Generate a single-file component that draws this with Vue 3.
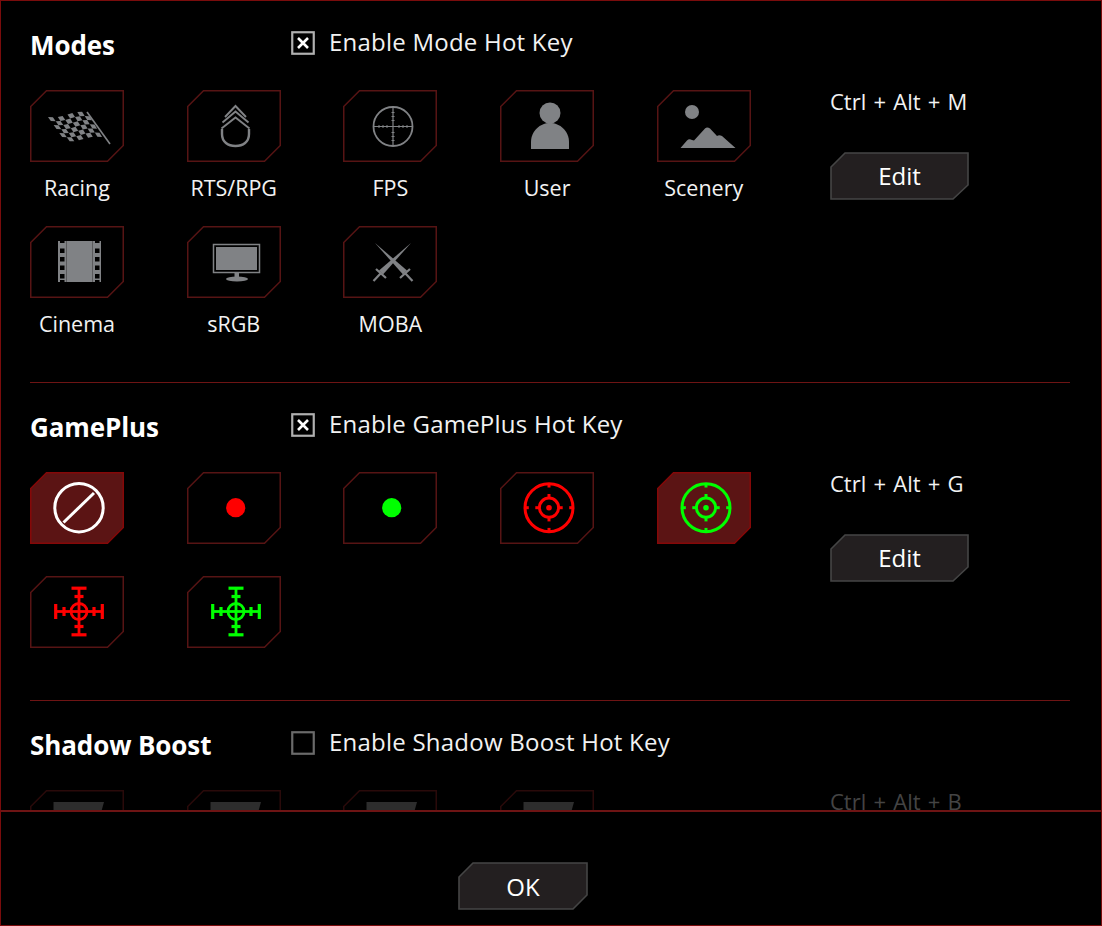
<script setup>
const frame = '0.75,16.5 16.5,0.75 93.25,0.75 93.25,55.5 77.5,71.25 0.75,71.25'

const modes = [
  { icon: 'racing', label: 'Racing' },
  { icon: 'rank', label: 'RTS/RPG' },
  { icon: 'scope', label: 'FPS' },
  { icon: 'user', label: 'User' },
  { icon: 'scenery', label: 'Scenery' },
  { icon: 'cinema', label: 'Cinema' },
  { icon: 'monitor', label: 'sRGB' },
  { icon: 'swords', label: 'MOBA' }
]
const plus = [
  { icon: 'none', active: true },
  { icon: 'dot', color: '#ff0000' },
  { icon: 'dot', color: '#00ff00' },
  { icon: 'target', color: '#ff0000' },
  { icon: 'target', color: '#00ff00', active: true },
  { icon: 'cross', color: '#ff0000' },
  { icon: 'cross', color: '#00ff00' }
]
const shadow = [{ icon: 'slab' }, { icon: 'slab' }, { icon: 'slab' }, { icon: 'slab' }]

const sections = [
  { title: 'Modes', hot: 'Enable Mode Hot Key', checked: true, keys: 'Ctrl + Alt + M', tiles: modes, labelled: true, edit: true },
  { title: 'GamePlus', hot: 'Enable GamePlus Hot Key', checked: true, keys: 'Ctrl + Alt + G', tiles: plus, edit: true },
  { title: 'Shadow Boost', hot: 'Enable Shadow Boost Hot Key', checked: false, keys: 'Ctrl + Alt + B', tiles: shadow, dim: true }
]

// Checker flag cells on a skewed quad
const A = [18, 27], B = [57, 22], C = [72, 47], D = [35, 51]
const pt = (u, v) => {
  const tx = A[0] + (B[0] - A[0]) * u, ty = A[1] + (B[1] - A[1]) * u
  const bx = D[0] + (C[0] - D[0]) * u, by = D[1] + (C[1] - D[1]) * u
  const w = Math.sin(u * Math.PI * 2) * 1.2
  return [(tx + (bx - tx) * v).toFixed(1), (ty + (by - ty) * v + w).toFixed(1)].join(',')
}
const cells = []
const nu = 8, nv = 6
for (let i = 0; i < nu; i++) {
  for (let j = 0; j < nv; j++) {
    if ((i + j) % 2 === 0) {
      cells.push([pt(i / nu, j / nv), pt((i + 1) / nu, j / nv), pt((i + 1) / nu, (j + 1) / nv), pt(i / nu, (j + 1) / nv)].join(' '))
    }
  }
}
const scopeTicks = [-14, -10, -6, 6, 10, 14]
const filmHoles = [22.5, 31, 39.5, 48]
const arms = [0, 90, 180, 270]
</script>

<template>
  <div class="window">
    <div class="scroll">
      <section v-for="s in sections" :key="s.title" class="section">
        <header class="head">
          <h2 class="title">{{ s.title }}</h2>
          <div class="hot">
            <svg class="check" width="24" height="24" viewBox="0 0 24 24">
              <rect x="1.25" y="1.25" width="21.5" height="21.5" fill="none" :stroke="s.checked ? '#b0b0b0' : '#6a6a6a'" stroke-width="2.2" />
              <path v-if="s.checked" d="M7 7 L17 17 M17 7 L7 17" stroke="#fff" stroke-width="2.6" fill="none" />
            </svg>
            <span class="hot-text">{{ s.hot }}</span>
          </div>
        </header>
        <div class="body">
          <div class="grid" :class="{ labelled: s.labelled }">
            <div v-for="(t, i) in s.tiles" :key="i" class="item">
              <svg class="tile" width="94" height="72" viewBox="0 0 94 72">
                <polygon :points="frame" :class="t.active ? 'frame-on' : s.dim ? 'frame-dim' : 'frame'" />
                <g v-if="t.icon === 'racing'" class="fill">
                  <polygon v-for="(c, k) in cells" :key="k" :points="c" />
                  <path d="M57 22 L80 54" stroke="#808285" stroke-width="1.6" fill="none" />
                </g>
                <g v-else-if="t.icon === 'rank'" class="line" stroke-width="1.9">
                  <path d="M38 27 L48.5 16 L59 27" />
                  <path d="M35.5 32.5 L48.5 21.5 L61.5 32.5" />
                  <path d="M34.5 38.5 L48.5 27.5 L62.5 38.5" />
                  <path d="M35 39 V44 C35 52 41 56 48.5 56 C56 56 62 52 62 44 V39" stroke-width="2.4" />
                </g>
                <g v-else-if="t.icon === 'scope'" class="line">
                  <circle cx="50" cy="36.5" r="19.5" stroke-width="1.8" />
                  <path d="M50 17 V56 M30.5 36.5 H69.5" stroke-width="1.2" />
                  <path v-for="d in scopeTicks" :key="d" :d="`M${50 + d} 35 v3 M48.5 ${36.5 + d} h3`" stroke-width="1" />
                </g>
                <g v-else-if="t.icon === 'user'" class="fill">
                  <circle cx="50" cy="23" r="10.5" />
                  <path d="M31 59 V52 C31 41 40 33 50 33 C60 33 69 41 69 52 V59 Z" />
                </g>
                <g v-else-if="t.icon === 'scenery'" class="fill">
                  <circle cx="35" cy="22" r="7" />
                  <path d="M23.5 58 L30 50.5 Q32 48.5 35 50 L37 50.5 L48 38.5 Q50 36.5 53 38.5 L60 46 Q62 44.5 65 46 L78.5 58 Z" />
                </g>
                <g v-else-if="t.icon === 'cinema'">
                  <path class="fill" d="M28 15 H71 V56 H28 Z" />
                  <path d="M36.5 15 V56 M62.5 15 V56" stroke="#5a5a5c" stroke-width="1" />
                  <g v-for="y in filmHoles" :key="y" fill="#000">
                    <rect x="30" :y="y" width="4.5" height="4.5" />
                    <rect x="65" :y="y" width="4.5" height="4.5" />
                  </g>
                  <path d="M30 15 h4.5 v2 h-4.5 Z M65 15 h4.5 v2 h-4.5 Z M30 54 h4.5 v2 h-4.5 Z M65 54 h4.5 v2 h-4.5 Z" fill="#000" />
                </g>
                <g v-else-if="t.icon === 'monitor'">
                  <rect x="26.5" y="18.5" width="46" height="28" fill="none" stroke="#808285" stroke-width="1.5" />
                  <rect x="29" y="21" width="41" height="23" fill="#808285" />
                  <rect x="47.5" y="47" width="4.5" height="5" fill="#808285" />
                  <ellipse cx="50" cy="53" rx="11" ry="2.4" fill="#808285" />
                </g>
                <g v-else-if="t.icon === 'swords'">
                  <g v-for="m in [1, -1]" :key="m" :transform="m === 1 ? '' : 'matrix(-1 0 0 1 100 0)'">
                    <polygon class="fill" points="32,17 60,48.5 64,44.5" />
                    <path d="M57 52 L67 43 M62 47 L69.5 55" stroke="#808285" stroke-width="2.2" fill="none" />
                  </g>
                </g>
                <g v-else-if="t.icon === 'none'" fill="none" stroke="#fff">
                  <circle cx="49" cy="35.7" r="24.2" stroke-width="3" />
                  <path d="M33.5 50.5 L64 21" stroke-width="3" />
                </g>
                <circle v-else-if="t.icon === 'dot'" cx="48.7" cy="35.7" r="9.6" :fill="t.color" />
                <g v-else-if="t.icon === 'target'" fill="none" :stroke="t.color" stroke-width="3">
                  <circle cx="49" cy="35.7" r="24" />
                  <circle cx="49" cy="35.7" r="9.6" />
                  <g v-for="a in arms" :key="a" :transform="`rotate(${a} 49 35.7)`">
                    <path d="M49 11.5 V15.5" />
                    <path d="M49 22 V26.5" />
                  </g>
                  <circle cx="49" cy="35.7" r="2.8" :fill="t.color" stroke="none" />
                </g>
                <g v-else-if="t.icon === 'cross'" fill="none" :stroke="t.color" stroke-width="2.8">
                  <circle cx="49" cy="35.5" r="8" />
                  <g v-for="a in arms" :key="a" :transform="`rotate(${a} 49 35.5)`">
                    <path d="M49 35.5 V12" />
                    <path d="M41.5 12.2 H56.5" stroke-width="3.2" />
                    <path d="M44.5 20.5 H53.5" stroke-width="3.2" />
                  </g>
                </g>
                <polygon v-else-if="t.icon === 'slab'" points="23.5,12 74,12 69,30 23.5,30" fill="#2d2d2d" />
              </svg>
              <div v-if="s.labelled" class="label">{{ t.label }}</div>
            </div>
          </div>
          <aside class="side">
            <div class="keys" :class="{ dim: s.dim }">{{ s.keys }}</div>
            <button v-if="s.edit" class="btn edit">
              <svg class="btn-bg" width="139" height="48" viewBox="0 0 139 48">
                <polygon points="1,15 15,1 138,1 138,33 123,47 1,47" />
              </svg>
              <span class="btn-text">Edit</span>
            </button>
          </aside>
        </div>
      </section>
    </div>
    <footer class="footer">
      <button class="btn ok">
        <svg class="btn-bg" width="130" height="48" viewBox="0 0 130 48">
          <polygon points="1,15 15,1 129,1 129,33 115,47 1,47" />
        </svg>
        <span class="btn-text">OK</span>
      </button>
    </footer>
  </div>
</template>

<style scoped>
.window {
  box-sizing: border-box;
  width: 1102px;
  height: 926px;
  border: 1px solid #7a0c0c;
  background: #000;
  display: flex;
  flex-direction: column;
  font-family: "Open Sans", "Noto Sans", sans-serif;
  color: #fff;
}
.scroll {
  height: 809px;
  overflow: hidden;
  padding: 0 31px 0 29px;
}
.section {
  padding: 29px 0 20px;
  border-bottom: 1px solid #6e1414;
}
.section:last-child {
  border-bottom: 0;
}
.head {
  display: flex;
  height: 26px;
  margin-bottom: 34px;
}
.title {
  width: 261px;
  margin: 0;
  font-size: 26px;
  line-height: 30px;
  font-weight: 700;
  letter-spacing: -0.1px;
}
.hot {
  display: flex;
  align-items: center;
  gap: 14px;
  height: 25px;
}
.check {
  display: block;
  flex: none;
}
.hot-text {
  margin-top: -2px;
  font-size: 24px;
  line-height: 24px;
  letter-spacing: 0.23px;
  color: #f2f2f2;
}
.body {
  display: flex;
}
.grid {
  width: 800px;
  display: grid;
  grid-template-columns: repeat(5, 156.7px);
  grid-auto-rows: 104px;
  align-content: start;
  flex: none;
}
.grid.labelled {
  grid-auto-rows: 136px;
}
.item {
  width: 94px;
}
.tile {
  display: block;
}
.frame {
  fill: #000;
  stroke: #571414;
  stroke-width: 1.5;
}
.frame-dim {
  fill: #000;
  stroke: #2a0a0a;
  stroke-width: 1.5;
}
.frame-on {
  fill: #5b1414;
  stroke: #850808;
  stroke-width: 1.5;
}
.fill {
  fill: #808285;
}
.line {
  fill: none;
  stroke: #808285;
}
.label {
  width: 94px;
  margin-top: 12px;
  white-space: nowrap;
  font-size: 21.5px;
  line-height: 28px;
  color: #f2f2f2;
  display: flex;
  justify-content: center;
}
.side {
  display: flex;
  flex-direction: column;
  align-items: flex-start;
}
.keys {
  font-size: 22px;
  line-height: 22px;
  word-spacing: 1.5px;
  color: #f2f2f2;
}
.keys.dim {
  color: #444;
}
.btn {
  position: relative;
  display: flex;
  align-items: center;
  justify-content: center;
  padding: 0;
  border: 0;
  background: none;
  font-family: inherit;
  color: #fff;
  height: 48px;
}
.btn-bg {
  position: absolute;
  inset: 0;
}
.btn-bg polygon {
  fill: #231f20;
  stroke: #454545;
  stroke-width: 1.6;
}
.btn-text {
  position: relative;
  font-size: 24px;
}
.edit {
  width: 139px;
  margin-top: 40px;
  padding-bottom: 2px;
}
.ok {
  width: 130px;
}
.footer {
  flex: 1;
  border-top: 2px solid #6e1414;
  display: flex;
  justify-content: center;
  padding: 50px 56px 0 0;
  box-sizing: border-box;
}
</style>

<style>
html, body {
  background: #000;
}
</style>
